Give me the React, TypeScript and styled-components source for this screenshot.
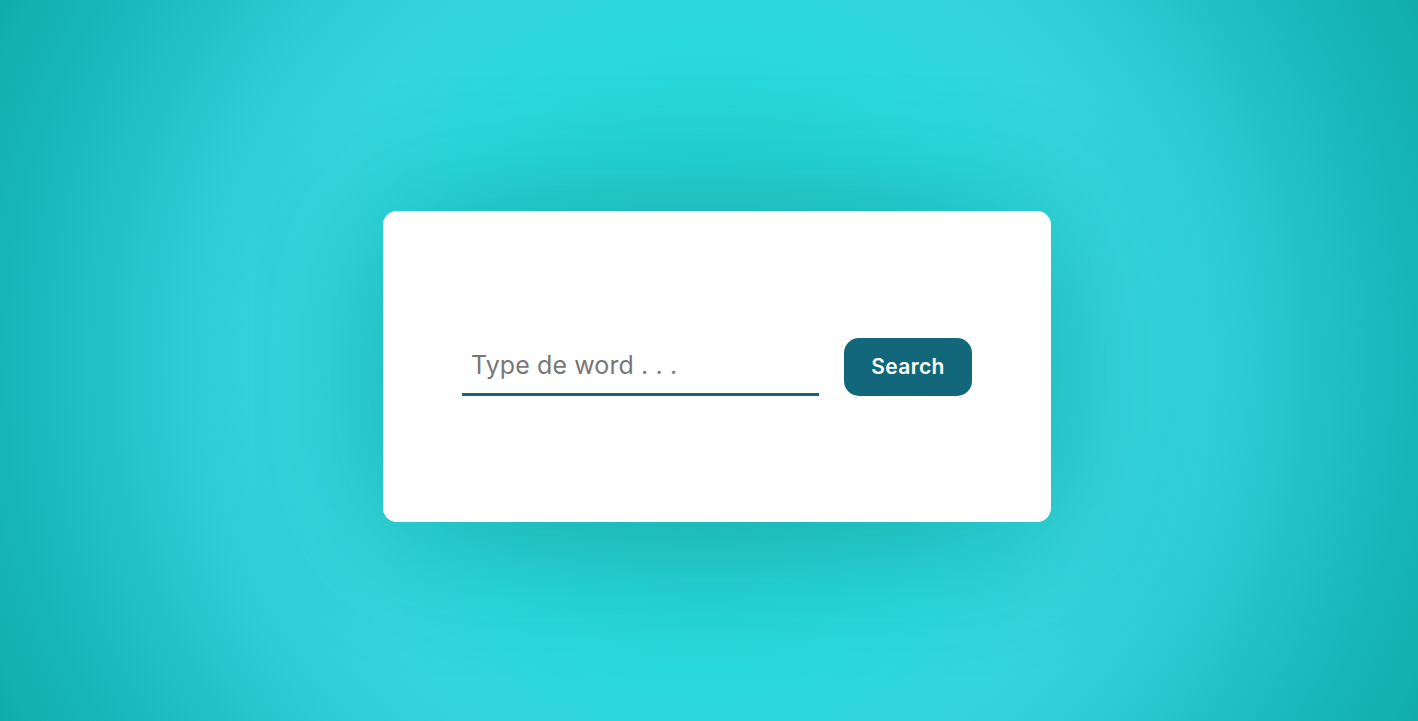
import React from 'react';
import styled, { createGlobalStyle } from 'styled-components';

const GlobalStyle = createGlobalStyle`
	html,
	body {
		margin: 0;
		height: 100%;
		overflow: hidden;
	}

	body {
		font-family: Inter, 'Noto Sans', 'Liberation Sans', sans-serif;
		background: radial-gradient(
			circle farthest-corner at 50% 50%,
			#1fc9c9 0%,
			#25d3d3 25%,
			#2ad9dc 40%,
			#34d5dd 53%,
			#2ccdd5 65%,
			#17b8ba 87%,
			#12acae 100%
		);
	}
`;

const Page = styled.main`
	box-sizing: border-box;
	height: 100vh;
	padding: 12px 0 0 16px;
	display: flex;
	align-items: center;
	justify-content: center;
`;

const Card = styled.section`
	box-sizing: border-box;
	width: 668px;
	height: 311px;
	background: #ffffff;
	border-radius: 14px;
	box-shadow: 0 10px 140px rgba(0, 70, 70, 0.3);
	display: flex;
	align-items: center;
	justify-content: center;
`;

const SearchForm = styled.form`
	display: flex;
	align-items: flex-end;
	gap: 25px;
`;

const WordInput = styled.input`
	box-sizing: border-box;
	width: 357px;
	height: 58px;
	padding: 0 9px 1px;
	border: none;
	border-bottom: 3px solid #13677a;
	outline: none;
	background: transparent;
	font-family: inherit;
	font-size: 25px;
	letter-spacing: 0.1px;
	color: #333;

	&::placeholder {
		color: #777777;
	}
`;

const SearchButton = styled.button`
	box-sizing: border-box;
	width: 128px;
	height: 58px;
	border: none;
	border-radius: 15px;
	background: #12677a;
	color: #ffffff;
	font-family: inherit;
	font-size: 21px;
	font-weight: 600;
	letter-spacing: 0.4px;
	cursor: pointer;

	&:hover {
		background: #0e5666;
	}
`;

const App = () => (
	<>
		<GlobalStyle />
		<Page>
			<Card>
				<SearchForm onSubmit={e => e.preventDefault()}>
					<WordInput type="text" placeholder="Type de word . . ." />
					<SearchButton type="submit">Search</SearchButton>
				</SearchForm>
			</Card>
		</Page>
	</>
);

export default App;
